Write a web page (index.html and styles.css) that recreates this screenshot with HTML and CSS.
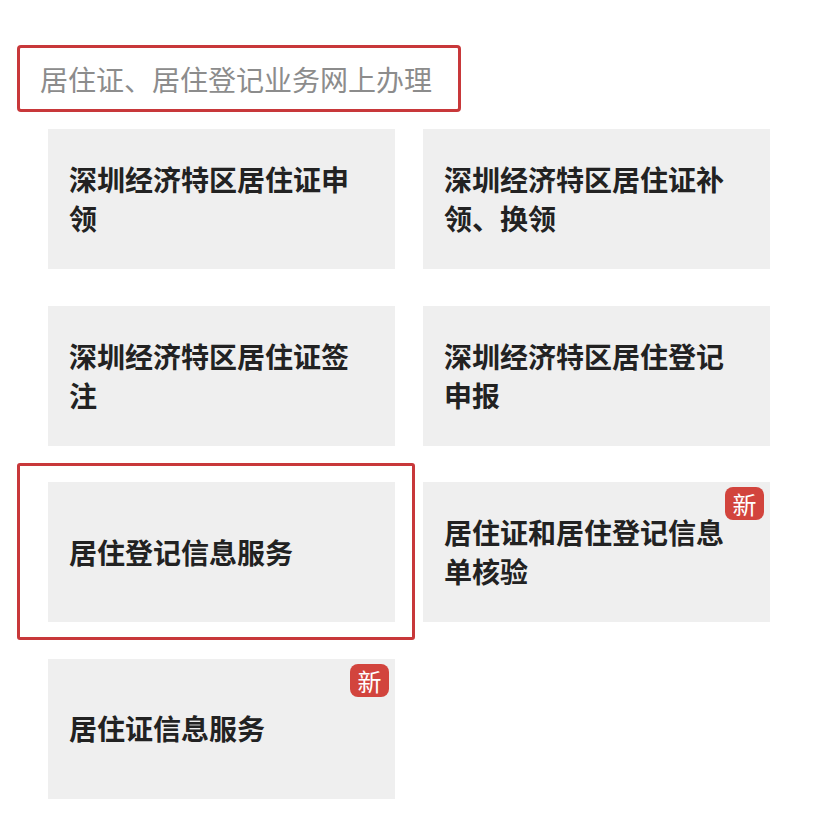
FILE: index.html
```html
<!DOCTYPE html>
<html lang="zh-CN">
<head>
<meta charset="utf-8">
<title>居住证、居住登记业务网上办理</title>
<link rel="stylesheet" href="styles.css">
</head>
<body>
<div class="page">
  <div class="title-box">居住证、居住登记业务网上办理</div>
  <div class="grid">
    <div class="card"><span class="card-text">深圳经济特区居住证申领</span></div>
    <div class="card"><span class="card-text">深圳经济特区居住证补领、换领</span></div>
    <div class="card"><span class="card-text">深圳经济特区居住证签注</span></div>
    <div class="card"><span class="card-text">深圳经济特区居住登记申报</span></div>
    <div class="card highlighted"><span class="card-text">居住登记信息服务</span><span class="mark"></span></div>
    <div class="card"><span class="card-text">居住证和居住登记信息单核验</span><span class="badge">新</span></div>
    <div class="card"><span class="card-text">居住证信息服务</span><span class="badge">新</span></div>
  </div>
</div>
</body>
</html>
```

FILE: styles.css
```css
html, body {
  margin: 0;
  padding: 0;
  background: #ffffff;
}

.page {
  width: 828px;
  height: 826px;
  padding-top: 45px;
  box-sizing: border-box;
  font-family: "Noto Sans CJK SC", "Noto Sans", sans-serif;
}

.title-box {
  margin-left: 17px;
  width: 444px;
  height: 67px;
  box-sizing: border-box;
  border: 3px solid #c8383a;
  border-radius: 4px;
  padding-left: 20px;
  display: flex;
  align-items: center;
  font-size: 28px;
  color: #8c8c8c;
  letter-spacing: 0;
}

.grid {
  margin-top: 17px;
  padding-left: 48px;
  display: grid;
  grid-template-columns: 347px 347px;
  grid-auto-rows: 140px;
  column-gap: 28px;
  row-gap: 36.5px;
}

.card {
  position: relative;
  background: #efefef;
  display: flex;
  align-items: center;
  padding: 0 40px 0 21px;
  box-sizing: border-box;
}

.card-text {
  font-size: 28px;
  font-weight: 700;
  line-height: 39px;
  color: #222222;
  max-width: 290px;
}

.badge {
  position: absolute;
  top: 5px;
  right: 6px;
  width: 39px;
  height: 33px;
  border-radius: 8px;
  background: #d2443d;
  color: #ffffff;
  font-size: 24px;
  line-height: 33px;
  text-align: center;
}

.mark {
  position: absolute;
  left: -31px;
  top: -19px;
  right: -20px;
  bottom: -18px;
  border: 3px solid #c8383a;
  border-radius: 3px;
}
```
